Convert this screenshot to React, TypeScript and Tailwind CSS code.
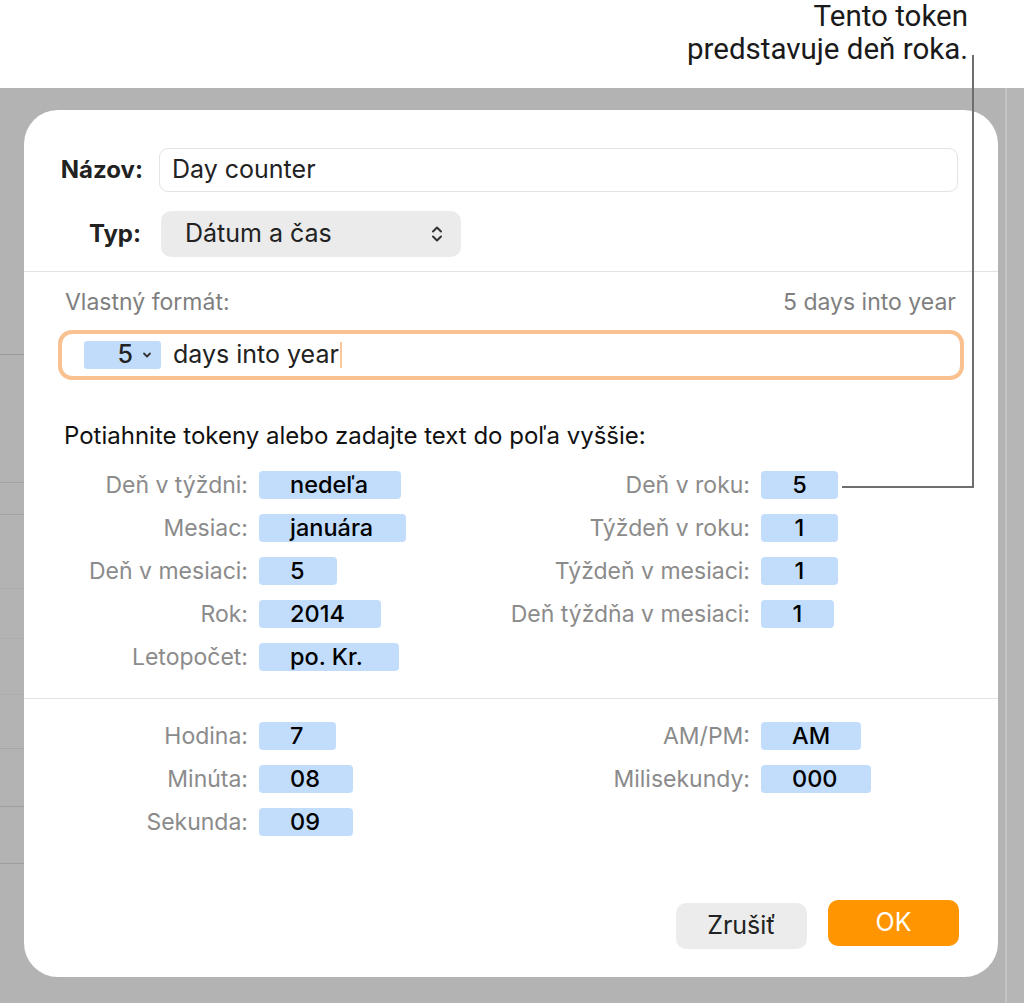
const dialogFont = { fontFamily: "Inter, 'Noto Sans', sans-serif" };

interface TokenRow {
  label: string;
  value: string;
  width: string;
}

const dateLeft: TokenRow[] = [
  { label: "Deň v týždni:", value: "nedeľa", width: "w-[142px]" },
  { label: "Mesiac:", value: "januára", width: "w-[147px]" },
  { label: "Deň v mesiaci:", value: "5", width: "w-[78px]" },
  { label: "Rok:", value: "2014", width: "w-[122px]" },
  { label: "Letopočet:", value: "po. Kr.", width: "w-[140px]" },
];

const dateRight: TokenRow[] = [
  { label: "Deň v roku:", value: "5", width: "w-[77px]" },
  { label: "Týždeň v roku:", value: "1", width: "w-[77px]" },
  { label: "Týždeň v mesiaci:", value: "1", width: "w-[77px]" },
  { label: "Deň týždňa v mesiaci:", value: "1", width: "w-[73px]" },
];

const timeLeft: TokenRow[] = [
  { label: "Hodina:", value: "7", width: "w-[77px]" },
  { label: "Minúta:", value: "08", width: "w-[94px]" },
  { label: "Sekunda:", value: "09", width: "w-[94px]" },
];

const timeRight: TokenRow[] = [
  { label: "AM/PM:", value: "AM", width: "w-[100px]" },
  { label: "Milisekundy:", value: "000", width: "w-[110px]" },
];

function Token({ row, center }: { row: TokenRow; center?: boolean }) {
  return (
    <div
      className={`flex h-[28px] items-center rounded-[4px] bg-[#c2ddfc] text-[23.5px] font-medium text-black ${row.width} ${
        center ? "justify-center" : "pl-[31px]"
      }`}
    >
      {row.value}
    </div>
  );
}

function TokenColumn({ rows, labelWidth, center }: { rows: TokenRow[]; labelWidth: string; center?: boolean }) {
  return (
    <div className="flex flex-col gap-[15px]">
      {rows.map((row) => (
        <div key={row.label} className="flex items-center gap-[11px]">
          <div className={`${labelWidth} whitespace-nowrap text-right text-[23px] leading-[28px] text-[#8b8b8b]`}>{row.label}</div>
          <Token row={row} center={center} />
        </div>
      ))}
    </div>
  );
}

function UpDownIcon() {
  return (
    <svg width="14" height="20" viewBox="0 0 14 20" fill="none" stroke="#333" strokeWidth="2" strokeLinecap="round" strokeLinejoin="round">
      <path d="M3 7.5 L7 3.5 L11 7.5" />
      <path d="M3 12.5 L7 16.5 L11 12.5" />
    </svg>
  );
}

export default function App() {
  return (
    <div className="relative flex h-[1003px] w-[1024px] flex-col overflow-hidden bg-white">
      {/* Callout text */}
      <div
        className="flex h-[88px] flex-col items-end pr-[56px] text-[29.5px] leading-[33px] text-[#1a1a1a]"
        style={{ fontFamily: "Roboto, 'Liberation Sans', sans-serif" }}
      >
        <div>Tento token</div>
        <div>predstavuje deň roka.</div>
      </div>

      {/* Gray app background */}
      <div className="flex flex-1 bg-[#b3b3b3]">
        <div className="flex w-[24px] flex-col">
          <div className="h-[267px] border-b border-[#9a9a9a]" />
          <div className="h-[128px] border-b border-[#a2a2a2]" />
          <div className="h-[32px] border-b border-[#a2a2a2]" />
          <div className="h-[74px] border-b border-[#adadad]" />
          <div className="h-[50px] border-b border-[#adadad]" />
          <div className="h-[56px] border-b border-[#adadad]" />
          <div className="h-[54px] border-b border-[#a6a6a6]" />
          <div className="h-[58px] border-b border-[#9e9e9e]" />
          <div className="h-[57px] border-b border-[#9e9e9e]" />
        </div>

        <div className="pt-[22px]">
          <div
            className="flex h-[867px] w-[974px] flex-col rounded-[34px] bg-white pt-[38px]"
            style={dialogFont}
          >
            {/* Name */}
            <div className="flex items-center pr-[40px]">
              <div className="w-[119px] whitespace-nowrap text-right text-[24px] font-bold text-[#222]">Názov:</div>
              <div className="ml-[16px] flex h-[44px] flex-1 items-center rounded-[9px] border border-[#e3e3e3] pl-[12px] text-[25px] text-[#222]">
                Day counter
              </div>
            </div>

            {/* Type */}
            <div className="mt-[19px] flex items-center">
              <div className="w-[117px] text-right text-[24px] font-bold text-[#222]">Typ:</div>
              <div className="ml-[20px] flex h-[46px] w-[300px] items-center justify-between rounded-[10px] bg-[#ebebeb] pl-[24px] pr-[17px] text-[25px] text-[#222]">
                <span>Dátum a čas</span>
                <UpDownIcon />
              </div>
            </div>

            <div className="mt-[14px] h-px bg-[#e3e3e3]" />

            {/* Custom format */}
            <div className="mt-[18px] flex h-[24px] items-center justify-between pl-[41px] pr-[42px] text-[23px] text-[#7f7f7f]">
              <span>Vlastný formát:</span>
              <span>5 days into year</span>
            </div>

            <div className="mx-[34px] mt-[16px] flex h-[50px] items-center rounded-[14px] border-4 border-[#f9c18f] pl-[22px]">
              <div className="flex h-[28px] w-[77px] items-center justify-end gap-[9px] rounded-[3px] bg-[#c1dcfb] pr-[9px] text-[25px] font-medium text-[#222]">
                <span>5</span>
                <svg width="10" height="8" viewBox="0 0 10 8" fill="none" stroke="#333" strokeWidth="1.8" strokeLinecap="round" strokeLinejoin="round">
                  <path d="M2 2.5 L5 5.5 L8 2.5" />
                </svg>
              </div>
              <span className="ml-[12px] text-[25px] text-[#222]">days into year</span>
              <div className="ml-[1px] h-[26px] w-[2px] bg-[#f9c79a]" />
            </div>

            {/* Tokens */}
            <div className="mt-[44px] pl-[40px] text-[24px] leading-[24px] text-[#111]">
              Potiahnite tokeny alebo zadajte text do poľa vyššie:
            </div>

            <div className="mt-[23px] flex">
              <div className="w-[482px]">
                <TokenColumn rows={dateLeft} labelWidth="w-[224px]" />
              </div>
              <TokenColumn rows={dateRight} labelWidth="w-[244px]" center />
            </div>

            <div className="mt-[27px] h-px bg-[#e3e3e3]" />

            <div className="mt-[23px] flex">
              <div className="w-[482px]">
                <TokenColumn rows={timeLeft} labelWidth="w-[224px]" />
              </div>
              <TokenColumn rows={timeRight} labelWidth="w-[244px]" />
            </div>

            {/* Buttons */}
            <div className="mt-auto mb-[28px] flex justify-end gap-[21px] pr-[39px]">
              <div className="mt-[3px] flex h-[46px] w-[131px] items-center justify-center rounded-[10px] bg-[#ececec] text-[25px] text-[#222]">
                Zrušiť
              </div>
              <div className="flex h-[46px] w-[131px] items-center justify-center rounded-[10px] bg-[#ff9500] text-[25px] text-white">
                OK
              </div>
            </div>
          </div>
        </div>

        <div className="ml-[7px] flex-1 border-l-2 border-[#c4c4c4] bg-[#b6b6b6]" />
      </div>

      {/* Callout leader line */}
      <div className="absolute left-[972px] top-[55px] h-[433px] w-[2px] bg-[#6e6e6e]" />
      <div className="absolute left-[842px] top-[486px] h-[2px] w-[132px] bg-[#6e6e6e]" />
    </div>
  );
}
